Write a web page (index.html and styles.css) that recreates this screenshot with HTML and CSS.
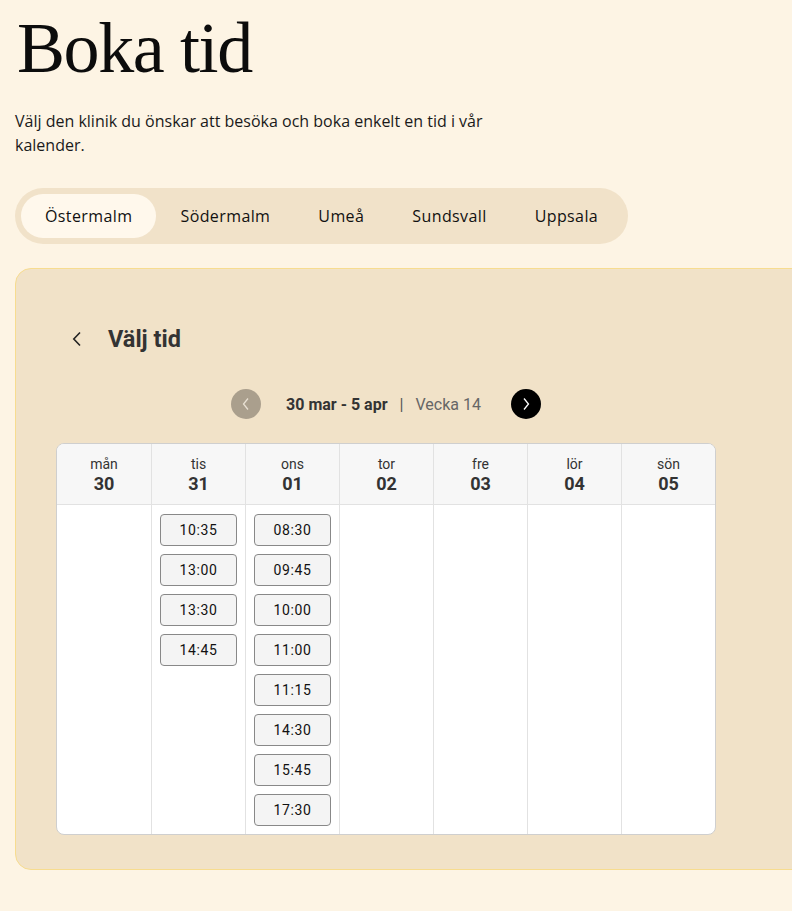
FILE: index.html
```html
<!DOCTYPE html>
<html lang="sv">
<head>
  <meta charset="UTF-8">
  <title>Boka tid</title>
  <link rel="stylesheet" href="styles.css">
</head>
<body>
  <h1 class="title">Boka tid</h1>
  <p class="intro">Välj den klinik du önskar att besöka och boka enkelt en tid i vår kalender.</p>

  <div class="tabs">
    <button class="tab active">Östermalm</button>
    <button class="tab">Södermalm</button>
    <button class="tab">Umeå</button>
    <button class="tab">Sundsvall</button>
    <button class="tab">Uppsala</button>
  </div>

  <section class="panel">
    <div class="panel-head">
      <button class="back">
        <svg width="10" height="16" viewBox="0 0 10 16"><path d="M8 1.5 1.8 8 8 14.5" fill="none" stroke="#222" stroke-width="1.6"/></svg>
      </button>
      <h2>Välj tid</h2>
    </div>

    <div class="week-nav">
      <button class="circle prev">
        <svg width="10" height="14" viewBox="0 0 10 14"><path d="M7 1.5 2.5 7 7 12.5" fill="none" stroke="#e8e0d3" stroke-width="1.3"/></svg>
      </button>
      <span class="range">30 mar - 5 apr</span>
      <span class="sep">|</span>
      <span class="week">Vecka 14</span>
      <button class="circle next">
        <svg width="10" height="14" viewBox="0 0 10 14"><path d="M3 1.5 7.5 7 3 12.5" fill="none" stroke="#fff" stroke-width="1.3"/></svg>
      </button>
    </div>

    <div class="calendar">
      <div class="day">
        <div class="day-head"><span>mån</span><strong>30</strong></div>
        <div class="slots"></div>
      </div>
      <div class="day">
        <div class="day-head"><span>tis</span><strong>31</strong></div>
        <div class="slots">
          <button class="slot">10:35</button>
          <button class="slot">13:00</button>
          <button class="slot">13:30</button>
          <button class="slot">14:45</button>
        </div>
      </div>
      <div class="day">
        <div class="day-head"><span>ons</span><strong>01</strong></div>
        <div class="slots">
          <button class="slot">08:30</button>
          <button class="slot">09:45</button>
          <button class="slot">10:00</button>
          <button class="slot">11:00</button>
          <button class="slot">11:15</button>
          <button class="slot">14:30</button>
          <button class="slot">15:45</button>
          <button class="slot">17:30</button>
        </div>
      </div>
      <div class="day">
        <div class="day-head"><span>tor</span><strong>02</strong></div>
        <div class="slots"></div>
      </div>
      <div class="day">
        <div class="day-head"><span>fre</span><strong>03</strong></div>
        <div class="slots"></div>
      </div>
      <div class="day">
        <div class="day-head"><span>lör</span><strong>04</strong></div>
        <div class="slots"></div>
      </div>
      <div class="day">
        <div class="day-head"><span>sön</span><strong>05</strong></div>
        <div class="slots"></div>
      </div>
    </div>
  </section>
</body>
</html>
```

FILE: styles.css
```css
html {
  overflow-x: hidden;
}
body {
  margin: 0;
  padding: 0 0 0 15px;
  background: #fdf4e4;
  color: #111;
  font-family: "Open Sans", "Liberation Sans", sans-serif;
}
button {
  font: inherit;
  color: inherit;
  border: none;
  background: none;
  padding: 0;
  cursor: pointer;
}
.title {
  margin: 0;
  padding: 8px 0 0 2px;
  font-family: "Liberation Serif", serif;
  font-weight: 400;
  font-size: 72px;
  line-height: 80px;
  letter-spacing: -1.4px;
  color: #0c0c0c;
}
.intro {
  margin: 21px 0 0;
  max-width: 500px;
  font-size: 16px;
  line-height: 24px;
  color: #1a1a1a;
}
.tabs {
  display: inline-flex;
  margin-top: 31px;
  padding: 6px;
  background: #f1e2c9;
  border-radius: 28px;
}
.tab {
  height: 44px;
  padding: 0 24px;
  border-radius: 22px;
  font-size: 16px;
  letter-spacing: 0.4px;
  color: #111;
}
.tab.active {
  background: #fff8ec;
}
.panel {
  width: 900px;
  margin-top: 24px;
  padding: 48px 0 34px 40px;
  background: #f1e2c8;
  border: 1px solid #f7dc8f;
  border-radius: 16px;
  font-family: Roboto, "Liberation Sans", sans-serif;
  box-sizing: border-box;
}
.panel-head {
  display: flex;
  align-items: center;
  height: 44px;
}
.back {
  display: flex;
  width: 52px;
  padding-left: 16px;
}
.panel-head h2 {
  margin: 0;
  font-size: 23.5px;
  font-weight: 700;
  color: #333;
}
.week-nav {
  display: flex;
  align-items: center;
  justify-content: center;
  width: 660px;
  margin-top: 28px;
  color: #333;
  font-size: 16px;
}
.circle {
  display: flex;
  align-items: center;
  justify-content: center;
  width: 30px;
  height: 30px;
  border-radius: 50%;
}
.prev {
  background: #aa9f8d;
  margin-right: 25px;
}
.next {
  background: #000;
  margin-left: 30px;
}
.range {
  font-weight: 700;
}
.sep {
  margin: 0 12px;
  color: #555;
}
.week {
  color: #666;
}
.calendar {
  display: grid;
  grid-template-columns: repeat(7, 1fr);
  width: 660px;
  margin-top: 24px;
  background: #fff;
  border: 1px solid #cfcfcf;
  border-radius: 8px;
  overflow: hidden;
  box-sizing: border-box;
}
.day + .day {
  border-left: 1px solid #e2e2e2;
}
.day-head {
  display: flex;
  flex-direction: column;
  align-items: center;
  justify-content: center;
  height: 61px;
  padding-top: 3px;
  box-sizing: border-box;
  background: #f7f7f7;
  border-bottom: 1px solid #e2e2e2;
  color: #333;
}
.day-head span {
  font-size: 14px;
  line-height: 17px;
}
.day-head strong {
  font-size: 18px;
  line-height: 22px;
  font-weight: 700;
}
.slots {
  display: flex;
  flex-direction: column;
  gap: 8px;
  padding: 9px 8px 6px;
  min-height: 314px;
}
.slot {
  height: 32px;
  background: #f4f4f4;
  border: 1px solid #888;
  border-radius: 4px;
  font-size: 14px;
  font-weight: 400;
  letter-spacing: 0.6px;
  color: #111;
}
```
